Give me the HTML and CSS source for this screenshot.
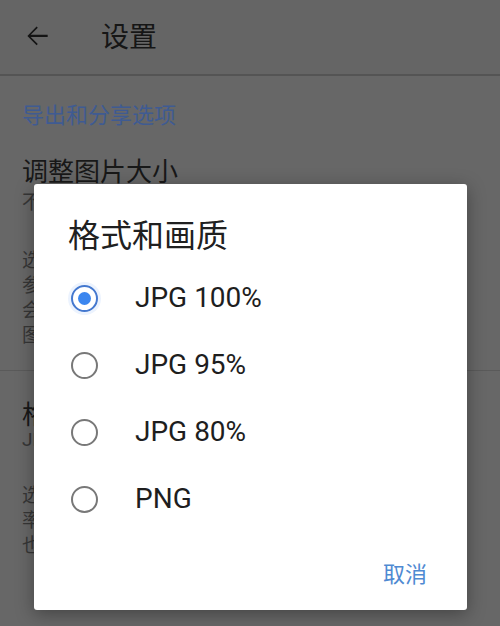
FILE: index.html
```html
<!DOCTYPE html>
<html lang="zh-CN">
<head>
<meta charset="utf-8">
<title>设置</title>
<link rel="stylesheet" href="styles.css">
</head>
<body>
<div class="page">
  <header class="toolbar">
    <svg class="back" viewBox="0 0 24 24" width="32" height="32" aria-hidden="true">
      <path d="M20 11.1H7.3l5.3-5.3-.9-.9L4.8 12l6.9 6.9.9-.9-5.3-5.3H20z" fill="#141414"/>
    </svg>
    <h1 class="toolbar-title">设置</h1>
  </header>
  <main class="content">
    <div class="section-header">导出和分享选项</div>
    <div class="pref">
      <div class="pref-title first">调整图片大小</div>
      <div class="pref-summary">不调整</div>
      <p class="pref-desc">选择导出或分享图片时使用的尺寸，原始尺寸将作为<br>参考。缩小后的图片文件体积更小，但画质也相应<br>会有所下降，建议在分享到社交网络时适当缩小<br>图片的尺寸。</p>
    </div>
    <div class="divider"></div>
    <div class="pref">
      <div class="pref-title second">格式和画质</div>
      <div class="pref-summary latin">JPG 100%</div>
      <p class="pref-desc second">选择导出图片时使用的文件格式和画质。JPG 压缩<br>率越高，文件越小，但画质越差；PNG 为无损格式，<br>也会使文件变大。</p>
    </div>
  </main>
</div>

<div class="dialog" role="dialog">
  <h2 class="dialog-title">格式和画质</h2>
  <ul class="options">
    <li class="option"><span class="radio checked"></span><span class="label">JPG 100%</span></li>
    <li class="option"><span class="radio"></span><span class="label">JPG 95%</span></li>
    <li class="option"><span class="radio"></span><span class="label">JPG 80%</span></li>
    <li class="option"><span class="radio"></span><span class="label">PNG</span></li>
  </ul>
  <div class="actions"><span class="btn">取消</span></div>
</div>
</body>
</html>
```
FILE: styles.css
```css
html, body {
  margin: 0;
  padding: 0;
  background: #676767;
}
body {
  width: 500px;
  height: 626px;
  overflow: hidden;
  position: relative;
  font-family: Roboto, "Noto Sans CJK SC", sans-serif;
}
.page {
  color: #1a1a1a;
}
.toolbar {
  height: 74px;
  display: flex;
  align-items: center;
  background: #656565;
  border-bottom: 2px solid #545454;
}
.back {
  margin-left: 21px;
  margin-top: -3px;
  flex: none;
}
.toolbar-title {
  margin: 0 0 0 48px;
  font-family: "Noto Sans CJK SC", sans-serif;
  font-weight: 400;
  font-size: 28px;
  line-height: 34px;
  color: #161616;
  transform: translateY(-2px);
}
.content {
  padding: 0 22px;
}
.section-header {
  margin-top: 24px;
  font-family: "Noto Sans CJK SC", sans-serif;
  font-size: 22px;
  line-height: 26px;
  color: #3f5b92;
}
.pref-title {
  font-family: "Noto Sans CJK SC", sans-serif;
  font-size: 26px;
  line-height: 30px;
  color: #181818;
}
.pref-title.first { margin-top: 29px; }
.pref-title.second { margin-top: 27px; }
.pref-summary {
  font-family: "Noto Sans CJK SC", sans-serif;
  font-size: 19px;
  line-height: 24px;
  color: #363636;
}
.pref-title.first + .pref-summary { margin-top: 4px; }
.pref-summary.latin {
  font-family: Roboto, "Noto Sans CJK SC", sans-serif;
}
.pref-desc {
  margin: 32.5px 0 0;
  font-family: "Noto Sans CJK SC", sans-serif;
  font-size: 19px;
  line-height: 25px;
  color: #363636;
  white-space: nowrap;
}
.pref-desc.second { margin-top: 28.5px; }
.divider {
  height: 1px;
  background: #5a5a5a;
  margin: 24.5px -22px 0;
}

/* dialog overlay */
.dialog {
  position: absolute;
  left: 34px;
  top: 184px;
  width: 433px;
  height: 426px;
  box-sizing: border-box;
  background: #ffffff;
  border-radius: 3px;
  box-shadow: 0 4px 18px rgba(0, 0, 0, 0.35);
  padding-top: 29px;
}
.dialog-title {
  margin: 0 0 0 34px;
  font-family: "Noto Sans CJK SC", sans-serif;
  font-weight: 400;
  font-size: 32px;
  line-height: 40px;
  color: #202020;
}
.options {
  list-style: none;
  margin: 11.5px 0 0;
  padding: 0;
}
.option {
  height: 67px;
  display: flex;
  align-items: center;
  padding-left: 37px;
}
.radio {
  width: 27px;
  height: 27px;
  box-sizing: border-box;
  border: 2.5px solid #787878;
  border-radius: 50%;
  display: flex;
  align-items: center;
  justify-content: center;
  flex: none;
}
.radio.checked {
  border-color: #4478cf;
  box-shadow: 0 0 0 3px rgba(66, 133, 244, 0.10);
}
.radio.checked::after {
  content: "";
  width: 13px;
  height: 13px;
  border-radius: 50%;
  background: #3b86ef;
}
.label {
  margin-left: 37px;
  font-family: Roboto, sans-serif;
  font-size: 28px;
  line-height: 34px;
  color: #1e1e1e;
}
.actions {
  display: flex;
  justify-content: flex-end;
  margin-top: 26.5px;
  padding-right: 40px;
}
.btn {
  font-family: "Noto Sans CJK SC", sans-serif;
  font-size: 22px;
  line-height: 26px;
  color: #4f8ad2;
}
```
